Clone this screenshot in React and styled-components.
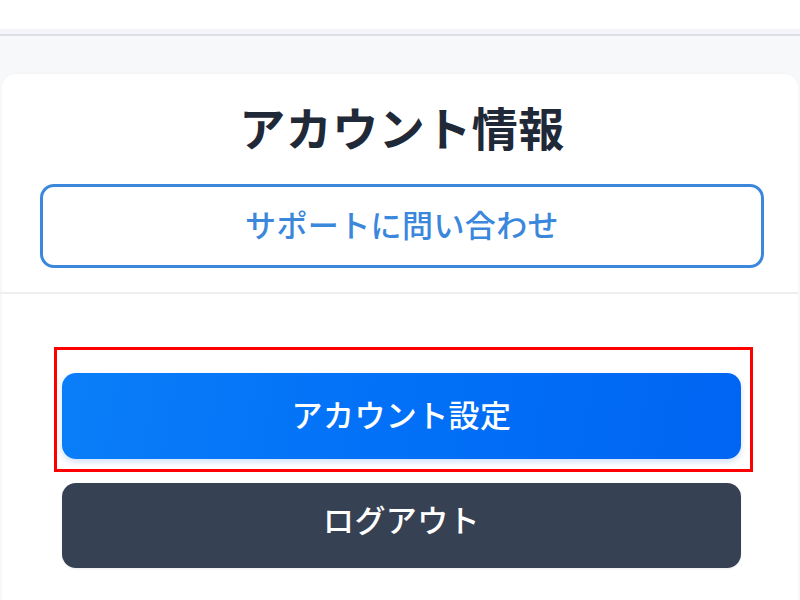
import React from "react";
import styled, { createGlobalStyle } from "styled-components";

const Global = createGlobalStyle`
  html, body { margin: 0; padding: 0; background: #ffffff; }
  body { font-family: "Noto Sans CJK JP", "Noto Sans", sans-serif; }
  * { box-sizing: border-box; }
`;

const Page = styled.div`
  width: 800px;
  height: 600px;
  overflow: hidden;
  display: flex;
  flex-direction: column;
  background: #f7f8fa;
`;

const TopBar = styled.div`
  height: 29px;
  background: #ffffff;
`;

const TopEdge = styled.div`
  height: 7px;
  background: #f4f4fb;
  border-bottom: 2px solid #dedee6;
`;

const Backdrop = styled.div`
  flex: 1;
  display: flex;
  flex-direction: column;
  padding: 38px 2px 0 2px;
`;

const Card = styled.div`
  flex: 1;
  background: #ffffff;
  border-radius: 14px 14px 0 0;
  display: flex;
  flex-direction: column;
  box-shadow: 0 -1px 3px rgba(0, 0, 0, 0.02);
`;

const Header = styled.div`
  display: flex;
  flex-direction: column;
  padding: 24px 34px 24px 38px;
  gap: 30px;
`;

const Title = styled.h1`
  margin: 0;
  text-align: center;
  font-size: 46px;
  line-height: 56px;
  font-weight: 700;
  color: #1f2937;
  letter-spacing: 0.5px;
`;

const OutlineButton = styled.button`
  height: 84px;
  border: 3px solid #3a87dc;
  border-radius: 14px;
  background: #ffffff;
  color: #3a87dc;
  font-family: inherit;
  font-size: 31px;
  font-weight: 500;
  letter-spacing: 0.4px;
  padding: 0 0 5px;
  display: flex;
  align-items: center;
  justify-content: center;
`;

const Divider = styled.div`
  height: 2px;
  background: #eeeeef;
  margin-left: -2px;
`;

const Actions = styled.div`
  display: flex;
  flex-direction: column;
  gap: 24px;
  padding: 79px 57px 0 60px;
`;

const Highlight = styled.div`
  position: relative;
`;

const Marker = styled.div`
  position: absolute;
  top: -26px;
  left: -8px;
  right: -12px;
  bottom: -13px;
  border: 3px solid #ff0000;
  pointer-events: none;
`;

const ActionButton = styled.button`
  width: 100%;
  height: ${(p) => p.$h}px;
  border: none;
  border-radius: 14px;
  color: #ffffff;
  font-family: inherit;
  font-size: 31px;
  font-weight: 500;
  letter-spacing: 0.4px;
  padding: 0 0 ${(p) => p.$lift}px;
  display: flex;
  align-items: center;
  justify-content: center;
  background: ${(p) =>
    p.$variant === "primary"
      ? "linear-gradient(100deg, #0a7ef9 0%, #0270f7 50%, #0065f2 100%)"
      : "#364153"};
  box-shadow: ${(p) =>
    p.$variant === "primary"
      ? "0 3px 6px rgba(0, 90, 220, 0.18)"
      : "0 1px 2px rgba(0, 0, 0, 0.08)"};
`;

export default function App() {
  return (
    <>
      <Global />
      <Page>
        <TopBar />
        <TopEdge />
        <Backdrop>
          <Card>
            <Header>
              <Title>アカウント情報</Title>
              <OutlineButton>サポートに問い合わせ</OutlineButton>
            </Header>
            <Divider />
            <Actions>
              <Highlight>
                <ActionButton $variant="primary" $h={86} $lift={5}>
                  アカウント設定
                </ActionButton>
                <Marker />
              </Highlight>
              <ActionButton $variant="dark" $h={85} $lift={14}>
                ログアウト
              </ActionButton>
            </Actions>
          </Card>
        </Backdrop>
      </Page>
    </>
  );
}
